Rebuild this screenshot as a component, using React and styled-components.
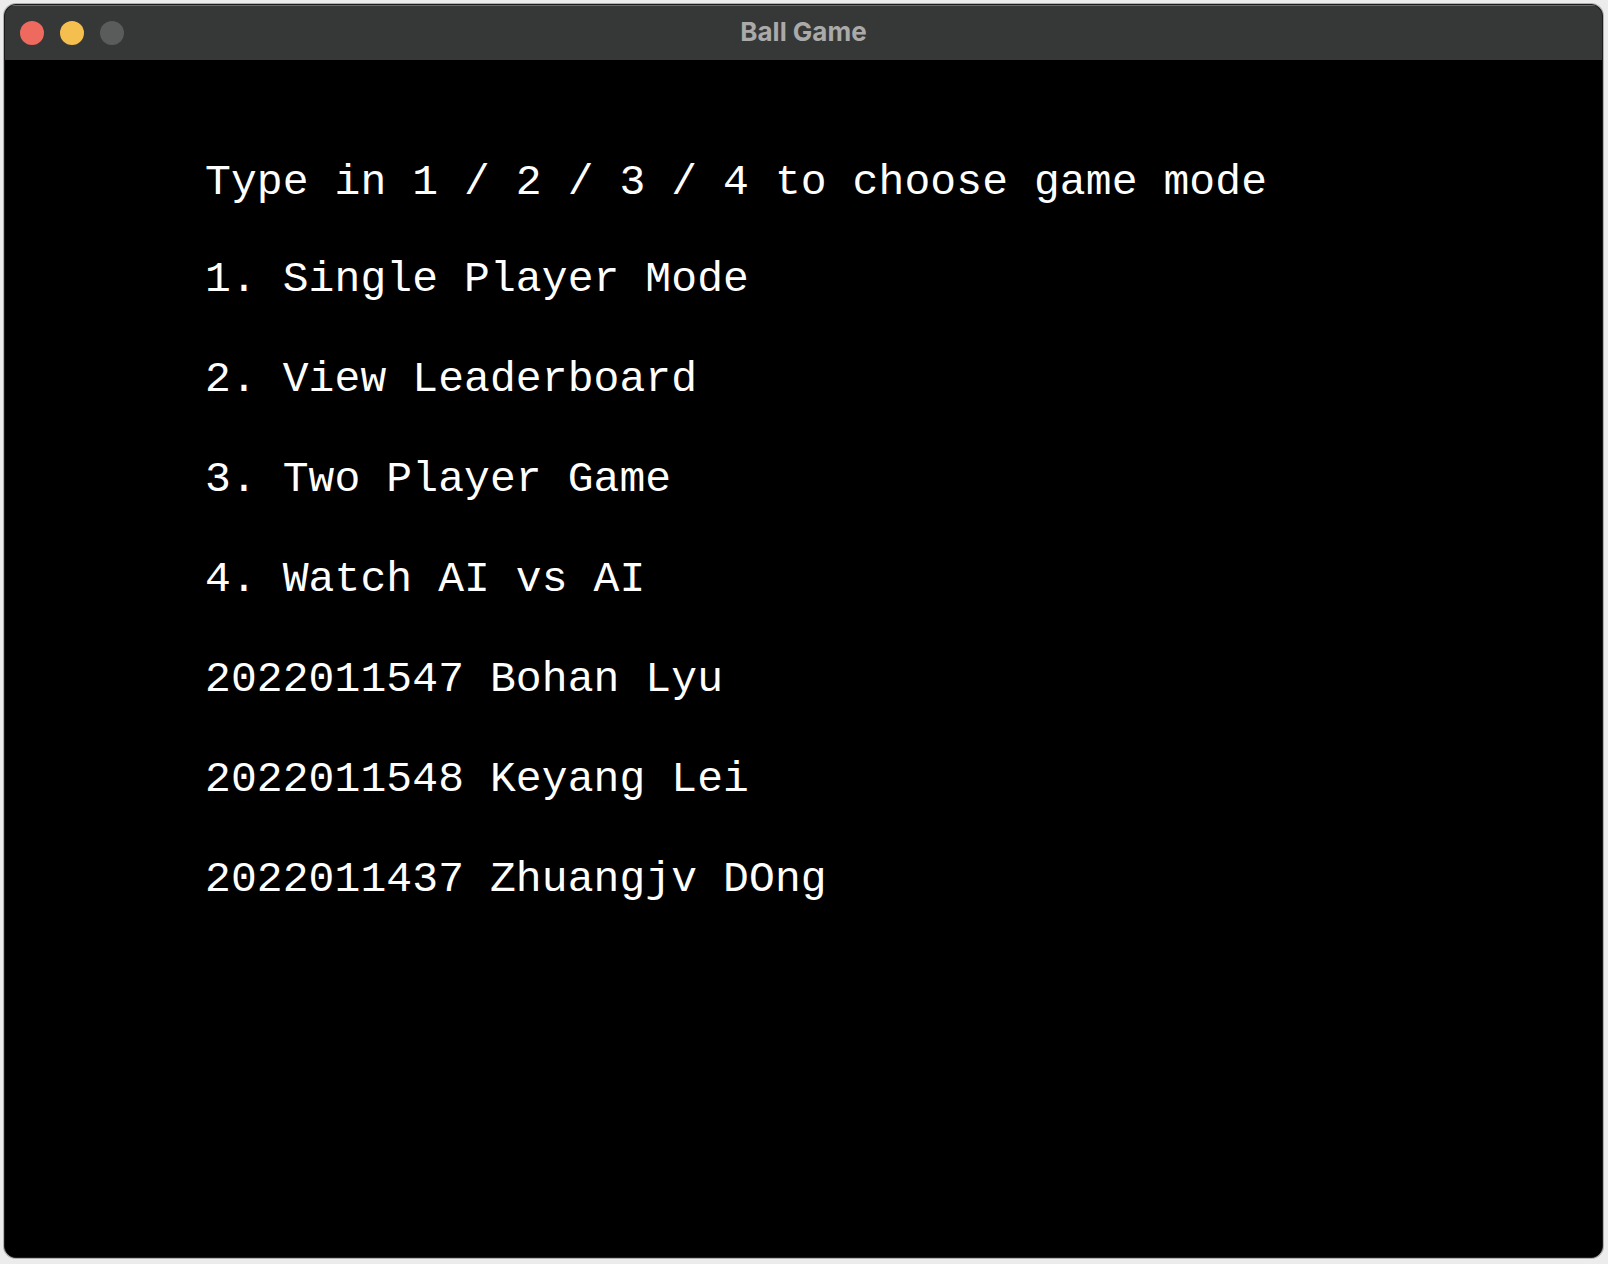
import styled, { createGlobalStyle } from "styled-components";

const GlobalStyle = createGlobalStyle`
  html, body {
    margin: 0;
    padding: 0;
    background: #ececec;
  }
  * {
    box-sizing: border-box;
  }
`;

const Desktop = styled.div`
  height: 100vh;
  padding: 4px 5px 6px 4px;
  display: flex;
`;

const Window = styled.div`
  flex: 1;
  display: flex;
  flex-direction: column;
  border: 1px solid #1c1c1c;
  border-radius: 12px;
  overflow: hidden;
  background: #000;
  box-shadow: 0 0 0 1px rgba(0, 0, 0, 0.25);
`;

const TitleBar = styled.div`
  height: 55px;
  flex: 0 0 55px;
  display: grid;
  grid-template-columns: 1fr auto 1fr;
  align-items: center;
  padding: 0 15px;
  background: #363837;
  box-shadow: inset 0 1px 0 #6a6c6b;
`;

const Lights = styled.div`
  display: flex;
  gap: 16px;
`;

const Light = styled.span`
  width: 24px;
  height: 24px;
  border-radius: 50%;
  background: ${(p) => p.$color};
`;

const Title = styled.div`
  font-family: Inter, "Noto Sans", sans-serif;
  font-weight: 700;
  font-size: 26px;
  color: #a9aaa9;
  margin-top: -2px;
`;

const Screen = styled.div`
  flex: 1;
  display: flex;
  flex-direction: column;
  padding: 75px 0 0 200px;
  background: #000;
`;

const Line = styled.div`
  font-family: "Liberation Mono", "Courier New", monospace;
  font-size: 43px;
  letter-spacing: 0.1px;
  line-height: ${(p) => (p.$tight ? "95px" : "100px")};
  height: ${(p) => (p.$tight ? "95px" : "100px")};
  color: #fff;
  white-space: pre;
`;

const lines = [
  "1. Single Player Mode",
  "2. View Leaderboard",
  "3. Two Player Game",
  "4. Watch AI vs AI",
  "2022011547 Bohan Lyu",
  "2022011548 Keyang Lei",
  "2022011437 Zhuangjv DOng",
];

export default function App() {
  return (
    <>
      <GlobalStyle />
      <Desktop>
        <Window>
          <TitleBar>
            <Lights>
              <Light $color="#ee6a5f" />
              <Light $color="#f5bf4f" />
              <Light $color="#5a5c5b" />
            </Lights>
            <Title>Ball Game</Title>
            <span />
          </TitleBar>
          <Screen>
            <Line $tight>Type in 1 / 2 / 3 / 4 to choose game mode</Line>
            {lines.map((text) => (
              <Line key={text}>{text}</Line>
            ))}
          </Screen>
        </Window>
      </Desktop>
    </>
  );
}
